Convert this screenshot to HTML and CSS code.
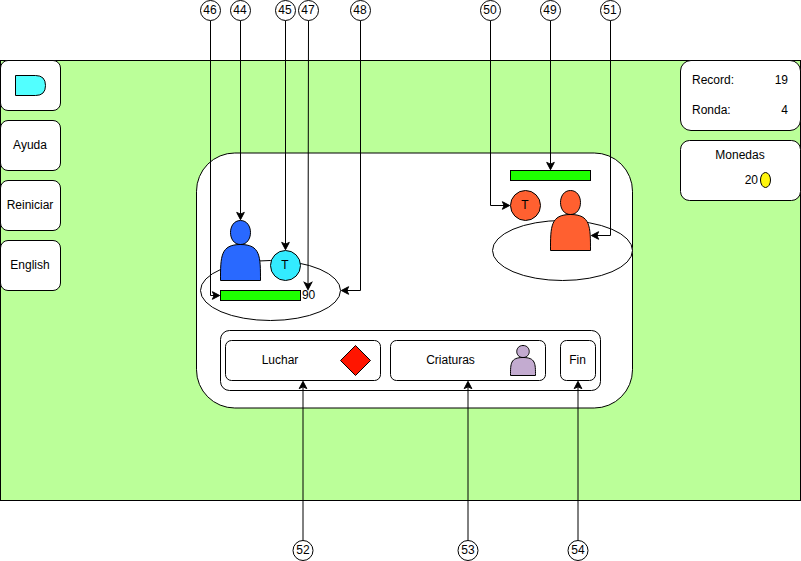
FILE: index.html
```html
<!DOCTYPE html>
<html lang="es">
<head>
<meta charset="utf-8">
<title>Combate</title>
<link rel="stylesheet" href="styles.css">
</head>
<body>
<main class="screen">
  <nav class="menu">
    <button class="card menu-item" aria-label="Salir">
      <svg class="exit-icon" viewBox="0 0 31 21"><path d="M.5.5h20q10 0 10 10t-10 10h-20z"/></svg>
    </button>
    <button class="card menu-item">Ayuda</button>
    <button class="card menu-item">Reiniciar</button>
    <button class="card menu-item">English</button>
  </nav>

  <section class="board">
    <svg class="scene" viewBox="196 152 437 257">
      <g class="shape" transform="translate(.5 .5)">
        <rect class="white" x="196" y="152.5" width="436" height="255" rx="38.25"/>
        <ellipse class="white" cx="270" cy="290" rx="70" ry="30"/>
        <ellipse class="white" cx="562" cy="250" rx="70" ry="30"/>
        <path class="blue" d="M220 280C220 256 220 244 240 244C226.67 244 226.67 220 240 220C253.33 220 253.33 244 240 244C260 244 260 256 260 280Z"/>
        <circle class="cyan" cx="285" cy="265" r="15"/>
        <rect class="life" x="220" y="290" width="80" height="10"/>
        <rect class="life" x="510" y="170" width="80" height="10"/>
        <circle class="orange" cx="525" cy="205" r="15"/>
        <path class="orange" d="M550 250C550 226 550 214 570 214C556.67 214 556.67 190 570 190C583.33 190 583.33 214 570 214C590 214 590 226 590 250Z"/>
      </g>
      <g class="label">
        <text x="285" y="269">T</text>
        <text x="525" y="209">T</text>
        <text x="308.6" y="299">90</text>
      </g>
    </svg>
    <div class="actions">
      <button class="action fight">
        <span class="action-name">Luchar</span>
        <svg class="diamond" viewBox="0 0 31 31"><path d="M15.5.5l15 15-15 15-15-15z"/></svg>
      </button>
      <button class="action creatures">
        <span class="action-name">Criaturas</span>
        <svg class="creature" viewBox="0 0 26 31"><path d="M.5 30.5C.5 18.5.5 12.5 13 12.5C4.67 12.5 4.67.5 13 .5C21.33.5 21.33 12.5 13 12.5C25.5 12.5 25.5 18.5 25.5 30.5Z"/></svg>
      </button>
      <button class="action end">Fin</button>
    </div>
  </section>

  <aside class="status">
    <dl class="card score">
      <div class="score-row"><dt>Record:</dt><dd>19</dd></div>
      <div class="score-row"><dt>Ronda:</dt><dd>4</dd></div>
    </dl>
    <div class="card coins">
      <div class="coins-title">Monedas</div>
      <div class="coins-value">20<svg class="coin" viewBox="0 0 11 16"><ellipse cx="5.5" cy="8" rx="5" ry="7.5"/></svg></div>
    </div>
  </aside>
</main>

<svg class="callouts" viewBox="0 0 801 561">
  <defs>
    <marker id="arrow" viewBox="-10 -6 12 12" refX="-5.25" refY="0" markerWidth="12" markerHeight="12" markerUnits="userSpaceOnUse" orient="auto" overflow="visible">
      <path d="M0.3 0L-7 3.8L-5.25 0L-7 -3.8Z" fill="#000" stroke="#000" stroke-miterlimit="10"/>
    </marker>
  </defs>
  <g class="leads" transform="translate(.5 .5)">
    <path d="M210 20V295H213.63"/>
    <path d="M240 20V213.63"/>
    <path d="M285 20V243.63"/>
    <path d="M308 20L307.52 283.63"/>
    <path d="M360 20V290H346.37"/>
    <path d="M490 20V205H503.63"/>
    <path d="M550 20V163.63"/>
    <path d="M610 20V235H596.37"/>
    <path d="M302.5 540V386.37"/>
    <path d="M467.5 540V386.37"/>
    <path d="M577.5 540V386.37"/>
  </g>
  <g class="shape" transform="translate(.5 .5)">
    <circle class="white" cx="210" cy="10" r="10"/>
    <circle class="white" cx="240" cy="10" r="10"/>
    <circle class="white" cx="285" cy="10" r="10"/>
    <circle class="white" cx="308" cy="10" r="10"/>
    <circle class="white" cx="360" cy="10" r="10"/>
    <circle class="white" cx="490" cy="10" r="10"/>
    <circle class="white" cx="550" cy="10" r="10"/>
    <circle class="white" cx="610" cy="10" r="10"/>
    <circle class="white" cx="302.5" cy="550" r="10"/>
    <circle class="white" cx="467.5" cy="550" r="10"/>
    <circle class="white" cx="577.5" cy="550" r="10"/>
  </g>
  <g class="label">
    <text x="210" y="14">46</text>
    <text x="240" y="14">44</text>
    <text x="285" y="14">45</text>
    <text x="308" y="14">47</text>
    <text x="360" y="14">48</text>
    <text x="490" y="14">50</text>
    <text x="550" y="14">49</text>
    <text x="610" y="14">51</text>
    <text x="303" y="554">52</text>
    <text x="468" y="554">53</text>
    <text x="578" y="554">54</text>
  </g>
</svg>
</body>
</html>
```
FILE: styles.css
```css
* { box-sizing: border-box; }

body {
  margin: 0;
  padding: 60px 0;
  width: 801px;
  height: 561px;
  position: relative;
  overflow: hidden;
  background: #fff;
  color: #000;
  font: 12px/14px "Liberation Sans", Arial, sans-serif;
}

button {
  margin: 0;
  padding: 0;
  font: inherit;
  color: inherit;
  background: #fff;
  border: 1px solid #000;
}

svg { display: block; }

.screen {
  display: flex;
  align-items: flex-start;
  height: 441px;
  background: #bbff99;
  box-shadow: inset 0 0 0 1px #000;
}

.card {
  background: #fff;
  border: 1px solid #000;
}

.menu {
  display: flex;
  flex-direction: column;
  gap: 9px;
  width: 61px;
}

.menu-item {
  display: flex;
  align-items: center;
  justify-content: center;
  height: 51px;
  padding-bottom: 1px;
  padding-right: 1px;
  border-radius: 8px;
}

.exit-icon {
  width: 31px;
  height: 21px;
  margin: 1px -1px 0 0;
  fill: #52ffff;
  stroke: #000;
}

.board {
  position: relative;
  width: 437px;
  height: 257px;
  margin: 92px auto 0 135px;
  padding: 178px 0 0 24px;
}

.scene {
  position: absolute;
  inset: 0;
  width: 437px;
  height: 257px;
}

.actions {
  position: relative;
  display: flex;
  width: 381px;
  height: 61px;
  padding: 9px 4px;
  border: 1px solid #000;
  border-radius: 9.5px;
}

.action {
  display: flex;
  align-items: center;
  width: 156px;
  height: 41px;
  border-radius: 6.5px;
}

.action-name {
  width: 108px;
  padding-bottom: 1px;
  text-align: center;
}

.creatures { margin: 0 14px 0 9px; }
.creatures .action-name { width: 119px; }

.end {
  width: 36px;
  justify-content: center;
  padding: 0 1px 1px 0;
}

.diamond {
  width: 31px;
  height: 31px;
  margin-left: 6px;
  fill: #ff1500;
  stroke: #000;
}

.creature {
  width: 26px;
  height: 31px;
  fill: #c3abd0;
  stroke: #000;
}

.status {
  display: flex;
  flex-direction: column;
  gap: 9px;
  width: 121px;
}

.score {
  height: 71px;
  margin: 0;
  padding: 12px 12px 0 11px;
  border-radius: 11px;
}

.score-row {
  display: flex;
  justify-content: space-between;
  height: 30px;
}

.score-row dd { margin: 0; }

.coins {
  height: 61px;
  padding: 7px 1px 0 0;
  border-radius: 9.5px;
  text-align: center;
}

.coins-value {
  display: flex;
  align-items: center;
  justify-content: flex-end;
  gap: 2px;
  height: 16px;
  margin-top: 10px;
  padding-right: 28px;
}

.coin {
  width: 11px;
  height: 16px;
  fill: #fff60d;
  stroke: #000;
}

.callouts {
  position: absolute;
  inset: 0;
  width: 801px;
  height: 561px;
  pointer-events: none;
}

.shape { stroke: #000; }
.white { fill: #fff; }
.blue { fill: #2969ff; }
.cyan { fill: #33ebff; }
.life { fill: #1eff00; }
.orange { fill: #ff6030; }

.leads path {
  fill: none;
  stroke: #000;
  stroke-miterlimit: 10;
  marker-end: url(#arrow);
}

.label {
  font: 12px "Liberation Sans", Arial, sans-serif;
  text-anchor: middle;
}
```
